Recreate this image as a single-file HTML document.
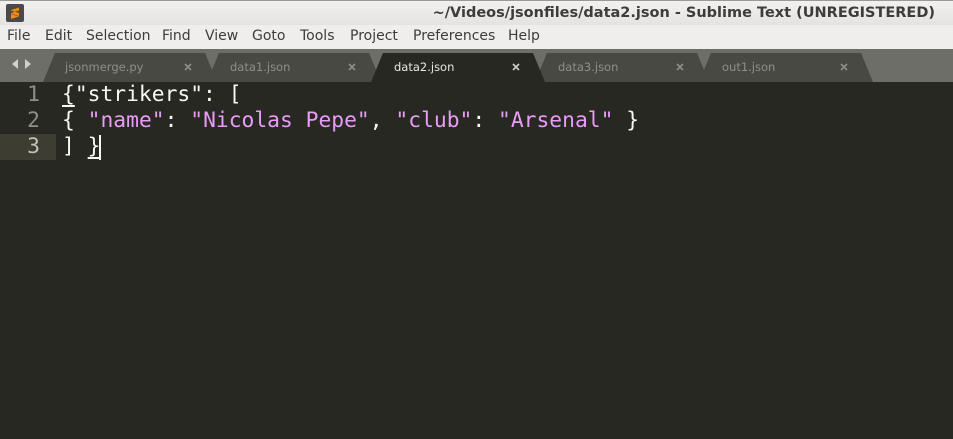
<!DOCTYPE html>
<html><head><meta charset="utf-8"><style>
*{margin:0;padding:0;box-sizing:border-box}
body{width:953px;height:439px;overflow:hidden;background:#272822;font-family:"Liberation Sans","DejaVu Sans",sans-serif;position:relative}
#title{position:absolute;left:0;top:0;width:953px;height:25px;background:linear-gradient(#f2f1f0,#e4e3e1);border-top:1px solid #999}
#title .t{position:absolute;right:18px;top:4px;font-family:"DejaVu Sans",sans-serif;font-weight:bold;font-size:14.5px;color:#3c3c3c}
#menu{position:absolute;left:0;top:25px;width:953px;height:24px;background:#efeeed;font-family:"DejaVu Sans",sans-serif;font-size:14px;color:#3c3c3c}
#menu span{position:absolute;top:3px}
#tabs{position:absolute;left:0;top:49px}
#ed{position:absolute;left:0;top:82px;width:953px;height:357px;background:#272822;font-family:"DejaVu Sans Mono",monospace;font-size:21.3px;color:#f8f8f2}
.ln{position:absolute;left:0;width:56px;text-align:right;padding-right:16px;color:#8f908a;height:26px;line-height:26px}
.cd{position:absolute;left:62px;height:26px;line-height:26px;white-space:pre}
.s{color:#e99cf6}
.u{text-decoration:underline;text-underline-offset:4px}
</style></head><body>
<div id="title">
<svg style="position:absolute;left:6px;top:3px" width="18" height="18"><rect width="18" height="18" rx="2" fill="#4a4a4a"/><path d="M5 7 L13 4.5 L13 7.5 L5 10 Z M5 10.5 L13 13 L13 10 L5 7.5Z M5 11 L13 13.5 L5 16Z" fill="#f28c0f" transform="translate(0,-1)"/></svg>
<div class="t">~/Videos/jsonfiles/data2.json - Sublime Text (UNREGISTERED)</div></div>
<div id="menu"><span style="left:7px">File</span><span style="left:45px">Edit</span><span style="left:86px">Selection</span><span style="left:162px">Find</span><span style="left:205px">View</span><span style="left:252px">Goto</span><span style="left:300px">Tools</span><span style="left:350px">Project</span><span style="left:413px">Preferences</span><span style="left:508px">Help</span></div>
<svg id="tabs" width="953" height="33" style="font-family:'DejaVu Sans',sans-serif;font-size:11.5px">
<rect width="953" height="33" fill="#6e6e69"/>
<path d="M12 15 L18 10 L18 20Z M31 15 L25 10 L25 20Z" fill="#d0d0cc"/>
<g fill="#494944">
<path d="M43 33 L55 4 L205 4 L217 33Z"/>
<path d="M207 33 L219 4 L369 4 L381 33Z"/>
<path d="M535 33 L547 4 L697 4 L709 33Z"/>
<path d="M699 33 L711 4 L861 4 L873 33Z"/>
</g>
<path d="M371 33 L383 4 L533 4 L545 33Z" fill="#272822"/>
<g fill="#8f8f89"><text x="65" y="22">jsonmerge.py</text><text x="230" y="22">data1.json</text><text x="558" y="22">data3.json</text><text x="722" y="22">out1.json</text></g>
<text x="394" y="22" fill="#e8e8e4">data2.json</text>
<g stroke="#8f8f89" stroke-width="1.6"><path d="M185 15l6 6M191 15l-6 6M349 15l6 6M355 15l-6 6M677 15l6 6M683 15l-6 6M841 15l6 6M847 15l-6 6"/></g>
<path d="M513 15l6 6M519 15l-6 6" stroke="#cfcfca" stroke-width="1.6"/>
</svg>
<div id="ed">
<div style="position:absolute;left:0;top:52px;width:56px;height:26px;background:#3e3d32"></div>
<div class="ln" style="top:0">1</div><div class="ln" style="top:26px">2</div><div class="ln" style="top:52px;color:#c2c2bc">3</div>
<div class="cd" style="top:0"><span class="u">{</span>"strikers": [</div>
<div class="cd" style="top:26px">{ <span class="s">"name"</span>: <span class="s">"Nicolas Pepe"</span>, <span class="s">"club"</span>: <span class="s">"Arsenal"</span> }</div>
<div class="cd" style="top:52px">] <span class="u">}</span></div>
<div style="position:absolute;left:99px;top:53px;width:2px;height:25px;background:#f8f8f0"></div>
</div>
</body></html>
